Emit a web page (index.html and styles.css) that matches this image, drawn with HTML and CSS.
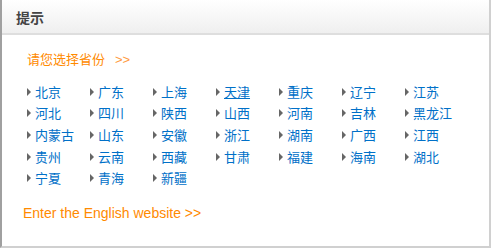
FILE: index.html
```html
<!DOCTYPE html>
<html>
<head>
<meta charset="utf-8">
<link rel="stylesheet" href="styles.css">
</head>
<body>
<div class="dialog">
  <div class="header"><span class="title">提示</span></div>
  <div class="content">
    <div class="prompt">请您选择省份 <span class="arrows">&gt;&gt;</span></div>
    <ul class="provinces">
      <li><a>北京</a></li><li><a>广东</a></li><li><a>上海</a></li><li><a class="hover">天津</a></li><li><a>重庆</a></li><li><a>辽宁</a></li><li><a>江苏</a></li>
      <li><a>河北</a></li><li><a>四川</a></li><li><a>陕西</a></li><li><a>山西</a></li><li><a>河南</a></li><li><a>吉林</a></li><li><a>黑龙江</a></li>
      <li><a>内蒙古</a></li><li><a>山东</a></li><li><a>安徽</a></li><li><a>浙江</a></li><li><a>湖南</a></li><li><a>广西</a></li><li><a>江西</a></li>
      <li><a>贵州</a></li><li><a>云南</a></li><li><a>西藏</a></li><li><a>甘肃</a></li><li><a>福建</a></li><li><a>海南</a></li><li><a>湖北</a></li>
      <li><a>宁夏</a></li><li><a>青海</a></li><li><a>新疆</a></li>
    </ul>
    <div class="english">Enter the English website &gt;&gt;</div>
  </div>
</div>
</body>
</html>
```
FILE: styles.css
```css
html, body { margin: 0; padding: 0; background: #fff; }
body { font-family: "Liberation Sans", "Noto Sans CJK SC", sans-serif; }
.dialog {
  width: 487px;
  height: 246px;
  border-left: 2px solid #a0a0a0;
  border-right: 2px solid #d0d0d0;
  border-bottom: 2px solid #d0d0d0;
  background: #fff;
}
.header {
  height: 33px;
  border-bottom: 2px solid #dedede;
  background: linear-gradient(#ffffff, #efefef);
  display: flex;
  align-items: center;
  padding-left: 14px;
}
.title {
  font-family: "Noto Sans CJK SC", sans-serif;
  font-weight: bold;
  font-size: 14px;
  color: #444;
}
.content { padding: 14px 0 0 25px; }
.prompt {
  font-family: "Noto Sans CJK SC", sans-serif;
  font-size: 13px;
  line-height: 20px;
  color: #ff8a00;
}
.prompt .arrows {
  font-family: "Liberation Sans", sans-serif;
  font-size: 13px;
  color: #ff9a40;
  margin-left: 7px;
}
.provinces {
  list-style: none;
  margin: 11px 0 0 0;
  padding: 0;
  display: grid;
  grid-template-columns: repeat(7, 63px);
  grid-auto-rows: 21.6px;
}
.provinces li {
  display: flex;
  align-items: center;
  font-family: "Noto Sans CJK SC", sans-serif;
  font-size: 13px;
}
.provinces li::before {
  content: "";
  width: 0;
  height: 0;
  border-top: 4px solid transparent;
  border-bottom: 4px solid transparent;
  border-left: 4px solid #666;
  margin-right: 4px;
}
.provinces a { color: #0070c8; line-height: 16px; }
.provinces a.hover { text-decoration: underline; }
.english {
  margin: 16px 0 0 -4px;
  font-size: 14px;
  color: #ff8a00;
}
```
